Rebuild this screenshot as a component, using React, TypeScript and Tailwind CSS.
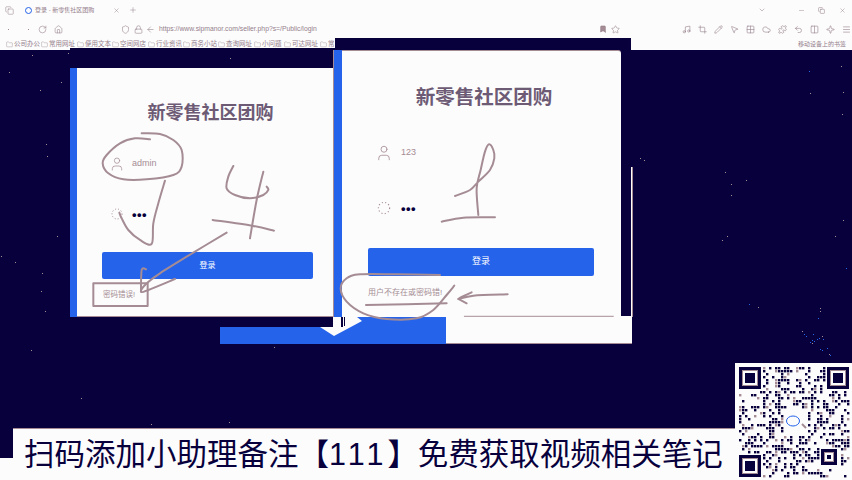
import React from 'react';
import {
  RotateCw, Home, Shield, Lock, ArrowLeft, Star, Bookmark, Folder, Plus, X, ChevronDown, Minus, Copy, Menu, User,
  Music, Crop, Pencil, MousePointer2, Grid2x2, Cloud, Puzzle, Undo2, Columns2, Sparkle,
} from 'lucide-react';

const cjk = { fontFamily: '"Liberation Sans", "Noto Sans CJK SC", sans-serif' };

const bookmarks = [
  { name: '公司办公', w: 'w-[35px]' },
  { name: '常用网址', w: 'w-[36px]' },
  { name: '便用文本', w: 'w-[35px]' },
  { name: '空间网店', w: 'w-[36px]' },
  { name: '行业资讯', w: 'w-[35px]' },
  { name: '商务小站', w: 'w-[35px]' },
  { name: '查询网址', w: 'w-[36px]' },
  { name: '小问题', w: 'w-[30px]' },
  { name: '可达网址', w: 'w-[36px]' },
  { name: '常', w: 'w-[14px]' },
];

const extensions = [Music, Crop, Pencil, MousePointer2, Grid2x2, Cloud, Puzzle, Undo2, Columns2, Sparkle, Menu];

const stars: [number, number, number?][] = [
  [32, 55], [9, 72], [61, 82], [40, 90], [46, 144], [47, 156], [57, 236], [1, 256], [15, 262], [42, 273], [41, 291], [45, 311],
  [31, 350], [81, 398], [841, 66], [809, 71, 1], [810, 93], [843, 92], [842, 114], [640, 158], [644, 160], [725, 172], [731, 184],
  [746, 180], [731, 195], [843, 220], [727, 236], [722, 240], [835, 236], [846, 268, 1], [749, 304, 1], [758, 307], [820, 308],
  [820, 311], [818, 318, 1], [802, 331], [804, 334, 1], [806, 336, 1], [813, 334, 1], [822, 336], [819, 338, 1], [817, 339, 1],
  [823, 339, 1], [812, 340, 1], [814, 341, 1], [810, 342, 1], [812, 343], [820, 349, 1], [822, 350, 1], [827, 348, 1], [829, 354],
  [830, 355, 1], [230, 58], [534, 45], [274, 347], [151, 424], [229, 422], [585, 429], [68, 53],
];

// fake qr modules, seeded so every render is the same
function qrModules() {
  const cells: [number, number][] = [];
  let seed = 111;
  for (let r = 0; r < 37; r++) {
    for (let c = 0; c < 37; c++) {
      seed = (seed * 1103515245 + 12345) & 0x7fffffff;
      const inFinder = (r < 8 && c < 8) || (r < 8 && c > 28) || (r > 28 && c < 8) || (r > 26 && r < 34 && c > 26 && c < 34);
      const inLogo = r > 13 && r < 23 && c > 14 && c < 23;
      if (!inFinder && !inLogo && (seed >> 16) % 100 < 40) cells.push([c, r]);
    }
  }
  return cells;
}

// catmull-rom through the pen points so strokes aren't polygons
function smooth(pts: number[][]) {
  let d = `M${pts[0][0]} ${pts[0][1]}`;
  for (let i = 0; i < pts.length - 1; i++) {
    const p0 = pts[Math.max(i - 1, 0)];
    const p1 = pts[i];
    const p2 = pts[i + 1];
    const p3 = pts[Math.min(i + 2, pts.length - 1)];
    d += ` C${p1[0] + (p2[0] - p0[0]) / 6} ${p1[1] + (p2[1] - p0[1]) / 6} ${p2[0] - (p3[0] - p1[0]) / 6} ${p2[1] - (p3[1] - p1[1]) / 6} ${p2[0]} ${p2[1]}`;
  }
  return d;
}

const leftStrokes = [
  [[270, 238], [225, 235], [180, 250], [140, 285], [128, 310], [145, 340], [190, 358], [260, 358], [340, 345], [365, 320], [365, 270], [340, 240], [300, 222], [245, 220]],
  [[315, 362], [295, 430], [280, 490], [275, 552], [240, 540], [205, 510], [185, 475], [178, 458]],
  [[520, 318], [505, 350], [500, 385], [525, 405], [570, 415], [610, 405], [625, 390], [620, 380]],
  [[610, 335], [590, 420], [570, 535]],
  [[458, 480], [575, 497], [642, 512]],
  [[500, 518], [400, 578], [300, 640], [258, 672], [243, 695], [265, 690], [345, 657]],
  [[243, 695], [245, 630], [258, 628]],
];

const rightStrokes = [
  [[375, 453], [420, 435], [445, 410], [480, 375], [493, 340], [490, 315], [477, 298], [465, 320], [452, 375], [440, 430], [445, 510]],
  [[335, 530], [400, 518], [495, 517]],
  [[330, 690], [200, 688], [90, 688], [50, 700], [32, 730], [50, 770], [100, 805], [170, 822], [260, 820], [310, 795], [350, 750], [373, 722]],
  [[108, 780], [350, 775]],
  [[533, 748], [430, 752], [385, 762], [425, 742]],
  [[385, 762], [410, 775]],
];

function Finder({ x, y, s = 22 }: { x: number; y: number; s?: number }) {
  return (
    <g>
      <rect x={x} y={y} width={s} height={s} fill="#08003c" />
      <rect x={x + 3} y={y + 3} width={s - 6} height={s - 6} fill="#a58c94" />
      <rect x={x + 4} y={y + 4} width={s - 8} height={s - 8} fill="#fcfcfc" />
      <rect x={x + 6} y={y + 6} width={s - 12} height={s - 12} fill="#08003c" />
    </g>
  );
}

function LoginCard(props: {
  frame: string; strip: string; body: string; titleClass: string; row1: string; row2: string; button: string; error: string; user: string; message: string; iconSize: number; iconGap: string; messageClass: string;
}) {
  return (
    <div className={`absolute flex ${props.frame}`}>
      <div className={`h-full bg-[#2563eb] ${props.strip}`} />
      <div className={`flex h-full flex-1 flex-col bg-[#fcfcfc] ${props.body}`}>
        <div className={`h-5 text-center leading-5 font-bold whitespace-nowrap text-[#6d5a75] ${props.titleClass}`}>新零售社区团购</div>
        <div className={`flex h-5 items-center pl-[7px] text-[9px] text-[#a58c94] ${props.row1} ${props.iconGap}`}>
          <User size={props.iconSize} strokeWidth={1.1} />
          <span>{props.user}</span>
        </div>
        <div className={`flex h-5 items-center pl-[7px] ${props.row2} ${props.iconGap}`}>
          <svg width={props.iconSize} height={props.iconSize} viewBox="0 0 16 16" fill="none" stroke="#a58c94" strokeWidth="1" strokeDasharray="1 2">
            <circle cx="8" cy="8" r="5" />
          </svg>
          <span className="text-[13px] leading-none font-bold tracking-[0.5px] text-[#08003c]">•••</span>
        </div>
        <button className={`rounded-[2px] bg-[#2563eb] text-white ${props.button}`}>登录</button>
        <div className={`flex h-5 items-center text-[#a58c94] ${props.error} ${props.messageClass}`}>{props.message}</div>
      </div>
    </div>
  );
}

export default function App() {
  return (
    <div className="relative h-[480px] w-[852px] overflow-hidden bg-[#08003c]" style={cjk}>
      <svg className="absolute inset-0" width="852" height="480" viewBox="0 0 852 480">
        {stars.map(([x, y, blue], i) => (
          <rect key={i} x={x} y={y} width="1" height="1" fill={blue ? '#2563eb' : '#a58c94'} />
        ))}
      </svg>

      {/* browser chrome */}
      <div className="relative flex h-[50px] flex-col bg-[#fcfcfc] text-[#95808c]">
        <div className="flex h-5 items-center">
          <Copy size={9} strokeWidth={1.4} className="ml-[5px]" />
          <span className="ml-[11px] h-[7px] w-[7px] rounded-full border border-[#2563eb]" />
          <span className="ml-[3px] w-[78px] text-[6px] whitespace-nowrap">登录 - 新零售社区团购</span>
          <X size={7} strokeWidth={1.5} />
          <Plus size={8} strokeWidth={1.5} className="ml-[9px]" />
          <div className="flex-1" />
          <ChevronDown size={8} strokeWidth={1.5} />
          <Minus size={7} strokeWidth={1.5} className="ml-[32px]" />
          <Copy size={7} strokeWidth={1.8} className="ml-[13px]" />
          <X size={7} strokeWidth={1.5} className="ml-[14px] mr-[6px]" />
        </div>
        <div className="flex h-[18px] items-center">
          <span className="ml-2 h-px w-px bg-[#a58c94]" />
          <span className="ml-[19px] h-px w-px bg-[#a58c94]" />
          <RotateCw size={9} strokeWidth={1.5} className="ml-[9px]" />
          <Home size={9} strokeWidth={1.5} className="ml-[7px]" />
          <Shield size={9} strokeWidth={1.5} className="ml-[58px]" />
          <Lock size={9} strokeWidth={1.5} className="ml-[4px]" />
          <ArrowLeft size={9} strokeWidth={1.5} className="ml-[3px]" />
          <span className="ml-[4px] w-[440px] text-[6.8px] whitespace-nowrap">https://www.sipmanor.com/seller.php?s=/Public/login</span>
          <Bookmark size={8} strokeWidth={2} fill="#a58c94" />
          <Star size={9} strokeWidth={1.5} className="ml-[4px]" />
          <div className="ml-[62px] flex gap-[7px]">
            {extensions.map((Icon, i) => (
              <Icon key={i} size={9} strokeWidth={1.6} />
            ))}
          </div>
        </div>
        <div className="flex h-3 items-center pl-[6px] text-[6.5px]">
          {bookmarks.map((b) => (
            <div key={b.name} className={`flex items-center gap-[1px] overflow-hidden whitespace-nowrap ${b.w}`}>
              <Folder size={7} strokeWidth={1.3} className="shrink-0" />
              <span>{b.name}</span>
            </div>
          ))}
          <div className="flex-1" />
          <span className="mr-[6px] text-[6px] whitespace-nowrap">移动设备上的书签</span>
        </div>
      </div>

      {/* stacked window edges */}
      <div className="absolute top-[48px] left-[70px] h-[3px] w-[265px] bg-[#08003c]" />
      <div className="absolute top-[38px] left-[335px] h-[13px] w-[296px] bg-[#08003c]" />

      {/* window behind */}
      <div className="absolute top-[316px] left-[446px] h-[28px] w-[186px] border-b border-[#a58c94] bg-[#fcfcfc]" />
      <div className="absolute top-[167px] left-[631px] h-[150px] w-[2px] border-r border-[#a58c94] bg-[#fcfcfc]" />
      <div className="absolute top-[327px] left-[220px] h-[17px] w-[226px] bg-[#2563eb]" />
      <div className="absolute top-[316px] left-[333px] h-[12px] w-[113px] bg-[#2563eb]" />

      <LoginCard
        frame="top-[68px] left-[70px] h-[249px] w-[263px]"
        strip="w-[7px]"
        body="border-b border-[#a58c94] pt-[35px] pr-5 pl-[25px]"
        titleClass="translate-x-[3px] text-[18px]"
        row1="mt-[31px]"
        row2="mt-[30px]"
        button="mt-7 h-[27px] w-[211px] text-[8px]"
        error="mt-[6px]"
        user="admin"
        message="密码错误!"
        iconSize={16}
        iconGap="gap-[7px]"
        messageClass="pl-px text-[7.5px]"
      />
      <LoginCard
        frame="top-[50px] left-[333px] h-[267px] w-[288px]"
        strip="w-[9px] border-l border-[#a58c94]"
        body="rounded-tr-[3px] border-t border-[#a58c94] pt-[36px] pl-[26px]"
        titleClass="w-[226px] translate-x-[3px] text-[19.5px]"
        row1="mt-9"
        row2="mt-[35px]"
        button="mt-[30px] h-7 w-[226px] text-[9px]"
        error="mt-[7px]"
        user="123"
        message="用户不存在或密码错!"
        iconSize={18}
        iconGap="gap-[8px]"
        messageClass="text-[8px]"
      />

      {/* pen strokes drawn over the recording */}
      <svg className="pointer-events-none absolute inset-0" width="852" height="480" viewBox="0 0 852 480" fill="none" stroke="#a58c94" strokeLinecap="round" strokeLinejoin="round">
        <polygon points="320,327 333,327 333,317 357,317 362,321 334,336" fill="#fcfcfc" stroke="none" />
        <rect x="341" y="317" width="2" height="10" fill="#08003c" stroke="none" />
        <rect x="344" y="317" width="1" height="9" fill="#08003c" stroke="none" />
        <g transform="translate(60 60) scale(0.3333)" strokeWidth="6">
          {leftStrokes.map((pts, i) => (
            <path key={i} d={smooth(pts)} />
          ))}
          <rect x="100" y="670" width="163" height="68" />
        </g>
        <g transform="translate(330 45) scale(0.3333)" strokeWidth="6">
          {rightStrokes.map((pts, i) => (
            <path key={i} d={smooth(pts)} />
          ))}
          <path d="M403 814 L850 814" strokeWidth="3" />
        </g>
      </svg>

      {/* caption + qr */}
      <div className="absolute top-[428px] left-[13px] flex h-[52px] w-[722px] items-center border-t border-[#a58c94] bg-[#fcfcfc] pl-[11px] text-[30.5px] leading-none font-normal whitespace-nowrap text-[#08003c]">
        <span>扫码添加小助理备注【<span className="tracking-[4px]">111</span>】免费获取视频相关笔记</span>
      </div>
      <div className="absolute top-[458px] left-0 h-[22px] w-[13px] bg-[#fcfcfc]" />
      <div className="absolute top-[363px] left-[735px] h-[117px] w-[117px] bg-[#fcfcfc]">
        <svg width="117" height="117" viewBox="735 363 117 117">
          {qrModules().map(([c, r], i) => (
            <rect key={i} x={739 + c * 3} y={367 + r * 3} width="2.4" height="2.4" fill={i % 6 === 0 ? '#a58c94' : '#08003c'} />
          ))}
          <Finder x={739} y={367} />
          <Finder x={827} y={367} />
          <Finder x={739} y={455} />
          <Finder x={821} y={449} s={16} />
          <path d="M802 424 L806 428" stroke="#a58c94" strokeWidth="2" />
          <ellipse cx="793" cy="421" rx="6.5" ry="5" fill="#fcfcfc" stroke="#2563eb" strokeWidth="1" />
        </svg>
      </div>
    </div>
  );
}
